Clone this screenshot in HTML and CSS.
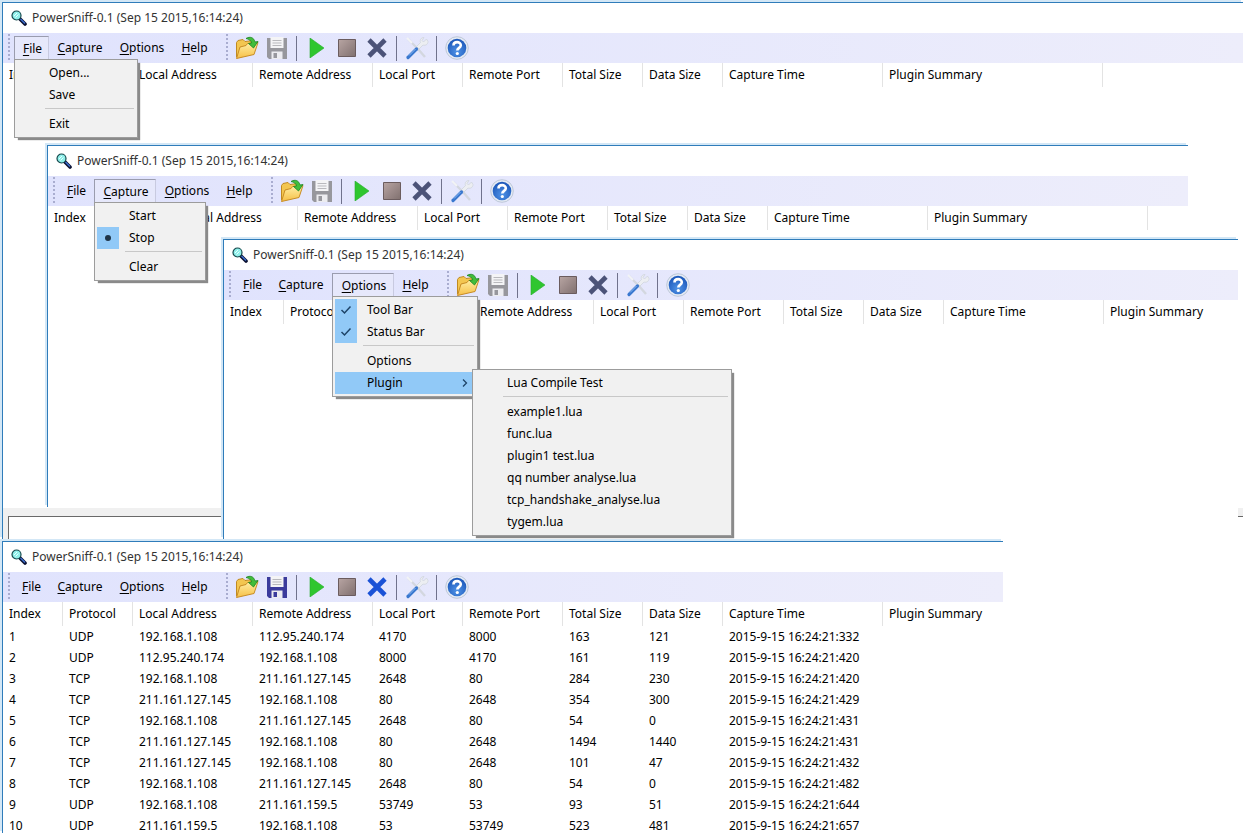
FILE: index.html
```html
<!DOCTYPE html>
<html lang="en">
<head>
  <meta charset="UTF-8">
  <title>PowerSniff-0.1</title>
  <link rel="stylesheet" href="styles.css">
</head>
<body>

<!-- icon set shared by all windows -->
<svg class="sprite" aria-hidden="true">
  <defs>
    <linearGradient id="gFolder" x1="0" y1="0" x2="0" y2="1">
      <stop offset="0" stop-color="#fff0a8"/><stop offset="1" stop-color="#f6bf45"/>
    </linearGradient>
    <linearGradient id="gStop" x1="0" y1="0" x2="1" y2="1">
      <stop offset="0" stop-color="#b8a5a3"/><stop offset="1" stop-color="#80706f"/>
    </linearGradient>
    <radialGradient id="gHelp" cx="0.5" cy="0.7" r="0.7">
      <stop offset="0" stop-color="#4f93e6"/><stop offset="1" stop-color="#1a55b8"/>
    </radialGradient>
  </defs>
  <symbol id="lens" viewBox="0 0 16 16">
    <path d="M9 9l5 5" stroke="#0a1030" stroke-width="3.600" stroke-linecap="round"/>
    <path d="M9.500 9l4.500 4.500" stroke="#3c6fd0" stroke-width="1.400"/>
    <circle cx="5.500" cy="5.500" r="4.500" fill="#8ff0ea" stroke="#15484c" stroke-width="1.200"/>
    <path d="M3 6l3-3M4.500 7.500l3-3" stroke="#e4ffff" stroke-width="1"/>
  </symbol>
  <symbol id="open" viewBox="0 0 24 24">
    <path d="M1.500 21V6.500l1.500-2 5-1 2 2 8-1v5" fill="#f3c650" stroke="#c08a22"/>
    <path d="M1.500 22.500L5 11l6-1.500 1.500-2 10.500-1-4 12z" fill="url(#gFolder)" stroke="#c88c24" stroke-linejoin="round"/>
    <path d="M11 2.500c4-2.500 8-1 9 3.500l3-.5-4.500 6.500-5-4.500 3-.5c-.5-2.500-2.500-4-5.500-4.500z" fill="#42bd3b" stroke="#1b8322" stroke-width=".8"/>
  </symbol>
  <symbol id="save" viewBox="0 0 20 22">
    <path d="M0 1h20v21H2l-2-2z" fill="var(--disk)"/>
    <path d="M3.500 0h13v11h-13z" fill="#f4f4f6"/>
    <path d="M5.500 3.500h9M5.500 6h9M5.500 8.500h9" stroke="#b9b9bd"/>
    <path d="M4.500 14.500h11V22h-11z" fill="#ececf0"/>
    <path d="M6.500 16h3.500v5H6.500z" fill="var(--disk)"/>
  </symbol>
  <symbol id="play" viewBox="0 0 16 20">
    <path d="M1 0l14 10L1 20z" fill="#2fc62f" stroke="#27ad2b" stroke-width=".6"/>
  </symbol>
  <symbol id="stop" viewBox="0 0 18 18">
    <path d="M.5.5h17v17H.5z" fill="url(#gStop)" stroke="#6b5c5e"/>
  </symbol>
  <symbol id="clear" viewBox="0 0 22 20">
    <path d="M3 2l16 16M19 2L3 18" stroke="var(--cross)" stroke-width="4.600"/>
  </symbol>
  <symbol id="tools" viewBox="0 0 24 24">
    <path d="M3 3l10 10 7 8" fill="none" stroke="#d3d7df" stroke-width="2.400"/>
    <path d="M2 2l5 5" stroke="#f2f4f6" stroke-width="2"/>
    <path d="M21.500 3l-3 3-1.500-1.500 2-3c-3 0-4.500 2.500-3.500 5l-4 4 2.500 2.500 4-4c3 1 5-1 5-3.500z" fill="#eceef2" stroke="#cdd2da" stroke-width=".7"/>
    <path d="M11.500 13L3 21.500" stroke="#3a78cf" stroke-width="3.200" stroke-linecap="round"/>
    <path d="M10.500 13L4 19.500" stroke="#8dbaf2" stroke-width="1"/>
  </symbol>
  <symbol id="help" viewBox="0 0 24 24">
    <circle cx="12" cy="12" r="11.300" fill="#e4eaf4" stroke="#b4bfd0" stroke-width=".8"/>
    <circle cx="12" cy="12" r="9.300" fill="url(#gHelp)"/>
    <path d="M8.500 9.500c0-4.500 7.300-4.300 7.300-.3 0 2.600-3.500 2.700-3.500 5.300" fill="none" stroke="#fff" stroke-width="2.600"/>
    <circle cx="12.300" cy="17.500" r="1.600" fill="#fff"/>
  </symbol>
  <symbol id="check" viewBox="0 0 22 22">
    <path d="M6.500 11l3 3 6-6.500" fill="none" stroke="#1e4468" stroke-width="1.500"/>
  </symbol>
  <symbol id="dot" viewBox="0 0 22 22">
    <circle cx="11" cy="11" r="3" fill="#1e3448"/>
  </symbol>
  <symbol id="arrow" viewBox="0 0 8 10">
    <path d="M2 1.500l3.500 3.500L2 8.500" fill="none" stroke="#1e4468" stroke-width="1.300"/>
  </symbol>
</svg>

<main class="desktop" id="desktop"></main>

<script>
  const columns = [
    ['Index', 60], ['Protocol', 70], ['Local Address', 120], ['Remote Address', 120],
    ['Local Port', 90], ['Remote Port', 100], ['Total Size', 80], ['Data Size', 80],
    ['Capture Time', 160], ['Plugin Summary', 220]
  ];

  const packets = [
    ['1', 'UDP', '192.168.1.108', '112.95.240.174', '4170', '8000', '163', '121', '2015-9-15 16:24:21:332', ''],
    ['2', 'UDP', '112.95.240.174', '192.168.1.108', '8000', '4170', '161', '119', '2015-9-15 16:24:21:420', ''],
    ['3', 'TCP', '192.168.1.108', '211.161.127.145', '2648', '80', '284', '230', '2015-9-15 16:24:21:420', ''],
    ['4', 'TCP', '211.161.127.145', '192.168.1.108', '80', '2648', '354', '300', '2015-9-15 16:24:21:429', ''],
    ['5', 'TCP', '192.168.1.108', '211.161.127.145', '2648', '80', '54', '0', '2015-9-15 16:24:21:431', ''],
    ['6', 'TCP', '211.161.127.145', '192.168.1.108', '80', '2648', '1494', '1440', '2015-9-15 16:24:21:431', ''],
    ['7', 'TCP', '211.161.127.145', '192.168.1.108', '80', '2648', '101', '47', '2015-9-15 16:24:21:432', ''],
    ['8', 'TCP', '192.168.1.108', '211.161.127.145', '2648', '80', '54', '0', '2015-9-15 16:24:21:482', ''],
    ['9', 'UDP', '192.168.1.108', '211.161.159.5', '53749', '53', '93', '51', '2015-9-15 16:24:21:644', ''],
    ['10', 'UDP', '211.161.159.5', '192.168.1.108', '53', '53749', '523', '481', '2015-9-15 16:24:21:657', '']
  ];

  // '-' is a separator line
  const menus = {
    File: [{ text: 'Open...' }, { text: 'Save' }, '-', { text: 'Exit' }],
    Capture: [{ text: 'Start' }, { text: 'Stop', mark: 'dot' }, '-', { text: 'Clear' }],
    Options: [
      { text: 'Tool Bar', mark: 'check' }, { text: 'Status Bar', mark: 'check' }, '-',
      { text: 'Options' },
      { text: 'Plugin', sub: [
        { text: 'Lua Compile Test' }, '-', { text: 'example1.lua' }, { text: 'func.lua' },
        { text: 'plugin1 test.lua' }, { text: 'qq number analyse.lua' },
        { text: 'tcp_handshake_analyse.lua' }, { text: 'tygem.lua' }
      ] }
    ],
    Help: []
  };

  const tools = ['open', 'save', '|', 'play', 'stop', 'clear', '|', 'tools', '|', 'help'];

  const windows = [
    { name: 'first', open: 'File', output: true, rows: [] },
    { name: 'second', open: 'Capture', rows: [] },
    { name: 'third', open: 'Options', rows: [] },
    { name: 'fourth', active: true, rows: packets }
  ];

  function icon(name, cls) {
    return `<svg class="${cls} ${cls}-${name}" aria-hidden="true"><use href="#${name}"/></svg>`;
  }

  function menuList(items, cls) {
    return `<ul class="menu ${cls}">` + items.map(item => {
      if (item === '-') return '<li class="menu-line"></li>';
      return `<li class="menu-item">
        <button class="menu-button${item.sub ? ' selected' : ''}">
          <span class="mark${item.mark ? ' marked' : ''}">${item.mark ? icon(item.mark, 'tick') : ''}</span>
          <span class="menu-text">${item.text}</span>
          ${item.sub ? icon('arrow', 'more') : ''}
        </button>
        ${item.sub ? menuList(item.sub, 'menu-plugin') : ''}
      </li>`;
    }).join('') + '</ul>';
  }

  function menuBar(open) {
    return '<ul class="menubar">' + Object.keys(menus).map(name => `
      <li class="bar-item">
        <button class="bar-button bar-${name.toLowerCase()}${name === open ? ' pressed' : ''}"><span class="key">${name[0]}</span>${name.slice(1)}</button>
        ${name === open ? menuList(menus[name], 'menu-' + name.toLowerCase()) : ''}
      </li>`).join('') + '</ul>';
  }

  function toolBar() {
    return '<div class="tools">' + tools.map(t => t === '|'
      ? '<span class="tool-line"></span>'
      : `<button class="tool" aria-label="${t}">${icon(t, 'icon')}</button>`).join('') + '</div>';
  }

  function packetTable(rows) {
    return `<div class="list"><table class="packets">
      <colgroup>${columns.map(c => `<col style="width:${c[1]}px">`).join('')}</colgroup>
      <thead><tr>${columns.map(c => `<th>${c[0]}</th>`).join('')}</tr></thead>
      <tbody>${rows.map(r => `<tr>${r.map(v => `<td>${v}</td>`).join('')}</tr>`).join('')}</tbody>
    </table></div>`;
  }

  document.getElementById('desktop').innerHTML = windows.map(w => `
    <section class="window ${w.name}${w.active ? ' active' : ''}">
      <header class="titlebar">${icon('lens', 'logo')}<span>PowerSniff-0.1 (Sep 15 2015,16:14:24)</span></header>
      <div class="bars"><span class="grip"></span>${menuBar(w.open)}<span class="grip"></span>${toolBar()}</div>
      ${packetTable(w.rows)}
      ${w.output ? '<div class="output"><textarea class="output-text" aria-label="Output" readonly></textarea></div>' : ''}
    </section>`).join('');
</script>

</body>
</html>
```
FILE: styles.css
```css
* {
  box-sizing: border-box;
}
body {
  margin: 0;
  background: #fff;
  color: #000;
  font: 12px/22px "Noto Sans", "Open Sans", sans-serif;
}
ul {
  list-style: none;
  margin: 0;
  padding: 0;
}
button {
  border: 0;
  padding: 0;
  background: none;
  color: inherit;
  font: inherit;
}
.sprite {
  position: absolute;
  width: 0;
  height: 0;
}
.desktop {
  position: relative;
  min-height: 100vh;
  overflow: hidden;
}

/* windows */
.window {
  --disk: #97979d;
  --cross: #4c5378;
  position: absolute;
  display: flex;
  flex-direction: column;
  background: #fff;
  border-top: 1px solid #2f7cba;
  border-left: 1px solid #2f7cba;
  box-shadow: -2px -2px 0 #d3e7f6;
}
.window.active {
  --disk: #3b3b9c;
  --cross: #1a52d6;
}
.first {
  left: 2px;
  right: 0;
  top: 2px;
  height: 537px;
}
.second {
  left: 47px;
  right: 55px;
  top: 145px;
  height: 362px;
}
.third {
  left: 223px;
  right: 5px;
  top: 239px;
  height: 300px;
}
.fourth {
  left: 2px;
  right: 240px;
  top: 541px;
  height: 292px;
}
.titlebar {
  display: flex;
  align-items: center;
  gap: 5px;
  height: 30px;
  padding-left: 8px;
  color: #333;
}
.logo {
  width: 16px;
  height: 16px;
}

/* menu bar and tool bar */
.bars {
  display: flex;
  align-items: center;
  height: 30px;
  padding-left: 5px;
  background: linear-gradient(90deg, #e0e3fd, #ededfb);
}
.grip {
  width: 2px;
  height: 28px;
  background: repeating-linear-gradient(#a9add0 0 2px, transparent 2px 4px);
}
.menubar {
  display: flex;
  padding: 0 10px 0 4px;
}
.bar-item {
  position: relative;
}
.bar-button {
  display: block;
  height: 24px;
  padding-bottom: 2px;
  border: 1px solid transparent;
  border-bottom: 0;
}
.bar-button.pressed {
  padding: 0 0 0 2px;
  border-color: #9a9cae #c8cae0 #9a9cae #9a9cae;
  background: #e6e8fb;
}
.bar-file {
  width: 35px;
}
.bar-capture,
.bar-options {
  width: 62px;
}
.bar-help {
  width: 43px;
}
.key {
  text-decoration: underline 1px;
  text-decoration-skip-ink: none;
  text-underline-offset: 2px;
}
.tools {
  display: flex;
  align-items: center;
  padding-left: 4px;
}
.tool {
  display: flex;
  align-items: center;
  justify-content: center;
  width: 30px;
  height: 28px;
}
.tool-line {
  width: 1px;
  height: 25px;
  margin: 0 5px 0 4px;
  background: #70728c;
}
.icon-open,
.icon-tools,
.icon-help {
  width: 24px;
  height: 24px;
}
.icon-save {
  width: 20px;
  height: 22px;
}
.icon-play {
  width: 16px;
  height: 20px;
}
.icon-stop {
  width: 18px;
  height: 18px;
}
.icon-clear {
  width: 22px;
  height: 20px;
}

/* drop-down menus */
.menu {
  position: absolute;
  left: 0;
  top: 23px;
  z-index: 10;
  padding: 2px;
  background: #f1f1f1;
  border: 1px solid #9c9c9c;
  box-shadow: 3px 3px 1px -1px #8a8a8a;
}
.menu-file {
  width: 124px;
}
.menu-capture {
  width: 112px;
}
.menu-options {
  width: 146px;
}
.menu-plugin {
  left: 137px;
  top: -3px;
  width: 260px;
}
.menu-item {
  position: relative;
}
.menu-button {
  display: flex;
  align-items: center;
  width: 100%;
  height: 22px;
  padding-right: 6px;
  text-align: left;
}
.menu-button.selected {
  background: #91c9f7;
}
.mark {
  width: 22px;
  height: 22px;
  margin-right: 10px;
}
.marked {
  background: #91c9f7;
}
.tick {
  display: block;
  width: 22px;
  height: 22px;
}
.menu-text {
  flex: 1;
}
.more {
  width: 8px;
  height: 10px;
}
.menu-line {
  height: 1px;
  margin: 2px 1px 4px 28px;
  background: #c8c8c8;
}

/* packet list */
.list {
  flex: 1;
  overflow: hidden;
}
.packets {
  width: 1100px;
  table-layout: fixed;
  border-collapse: separate;
  border-spacing: 0;
}
.packets th,
.packets td {
  padding: 0 0 0 6px;
  font-weight: normal;
  text-align: left;
  white-space: nowrap;
}
.packets th {
  height: 24px;
  border-right: 1px solid #e3e3e3;
}
.packets td {
  height: 21px;
  line-height: 21px;
}

/* output pane */
.output {
  height: 31px;
  padding: 8px 0 0 5px;
  background: #f0f0f0;
}
.output-text {
  display: block;
  width: 100%;
  height: 23px;
  border: 0;
  border-top: 1px solid #696969;
  border-left: 1px solid #696969;
  background: #fff;
  resize: none;
}
```
